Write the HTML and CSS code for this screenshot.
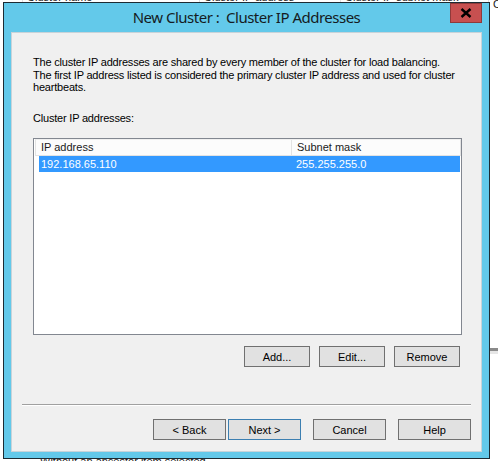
FILE: index.html
```html
<!DOCTYPE html>
<html>
<head>
<meta charset="utf-8">
<link rel="stylesheet" href="styles.css">
</head>
<body>
<div class="desktop">
  <div class="bg-header">
    <span class="bg-col bg-c1">Cluster name</span>
    <span class="bg-col bg-c2">Cluster IP address</span>
    <span class="bg-col bg-c3">Cluster IP subnet mask</span>
    <span class="bg-col bg-c4">Clu</span>
  </div>
  <div class="bg-rule"></div>
  <div class="bg-footer">Without an ancestor item selected</div>

  <div class="window">
    <div class="titlebar">
      <span class="title">New Cluster :&nbsp; Cluster IP Addresses</span>
      <div class="close">
        <svg width="12" height="10" viewBox="0 0 12 10"><path d="M1.5 1 L10.5 9 M10.5 1 L1.5 9" stroke="#000" stroke-width="2.4" fill="none"/></svg>
      </div>
    </div>
    <div class="panel">
      <p class="intro">The cluster IP addresses are shared by every member of the cluster for load balancing.<br>The first IP address listed is considered the primary cluster IP address and used for cluster heartbeats.</p>
      <div class="label">Cluster IP addresses:</div>
      <div class="listbox">
        <div class="lv-header">
          <div class="hcol hcol1">IP address</div>
          <div class="hcol hcol2">Subnet mask</div>
        </div>
        <div class="lv-row selected">
          <div class="rcol rcol1">192.168.65.110</div>
          <div class="rcol rcol2">255.255.255.0</div>
        </div>
      </div>
      <div class="list-buttons">
        <div class="btn btn-sm">Add...</div>
        <div class="btn btn-sm">Edit...</div>
        <div class="btn btn-sm">Remove</div>
      </div>
      <div class="separator"></div>
      <div class="nav-buttons">
        <div class="btn btn-nav">&lt; Back</div>
        <div class="btn btn-nav btn-default">Next &gt;</div>
        <div class="btn btn-nav btn-gap">Cancel</div>
        <div class="btn btn-nav btn-gap">Help</div>
      </div>
    </div>
  </div>
</div>
</body>
</html>
```

FILE: styles.css
```css
html, body {
  margin: 0;
  padding: 0;
  background: #ffffff;
}

.desktop {
  position: relative;
  width: 498px;
  height: 461px;
  overflow: hidden;
  background: #ffffff;
  font-family: "Liberation Sans", Arial, sans-serif;
}

.bg-header {
  position: absolute;
  left: 0;
  top: -9px;
  width: 498px;
  height: 12px;
  font-size: 11px;
  color: #1a1a1a;
}

.bg-col {
  position: absolute;
  top: 0;
  padding-left: 4px;
  border-left: 1px solid #e0e0e0;
}

.bg-c1 { left: 22px; }
.bg-c2 { left: 199px; }
.bg-c3 { left: 340px; }
.bg-c4 { left: 488px; top: 7px; }

.bg-rule {
  position: absolute;
  left: 490px;
  top: 348px;
  width: 8px;
  height: 3px;
  background: #8a8a8a;
  border-bottom: 3px solid #e6e6e6;
}

.bg-footer {
  position: absolute;
  left: 40px;
  top: 455px;
  font-size: 11px;
  color: #202020;
}

.window {
  position: absolute;
  left: 3px;
  top: 2px;
  width: 487px;
  height: 457px;
  box-sizing: border-box;
  border: 1px solid #1d2b33;
  background: #63c9ea;
  padding: 0 7px 6px 7px;
  display: flex;
  flex-direction: column;
}

.titlebar {
  position: relative;
  height: 29px;
  flex: none;
  display: flex;
  justify-content: center;
}

.title {
  font-family: "Noto Sans", "Open Sans", sans-serif;
  font-size: 15px;
  letter-spacing: -0.5px;
  line-height: 20px;
  padding-top: 4px;
  color: #151b22;
}

.close {
  position: absolute;
  right: 0;
  top: 0;
  width: 32px;
  height: 20px;
  box-sizing: border-box;
  background: #c75050;
  border: 1px solid #8f3a3a;
  display: flex;
  align-items: center;
  justify-content: center;
}

.panel {
  flex: 1;
  background: #f0f0f0;
  box-sizing: border-box;
  border: 1px solid #c8d3d9;
  display: flex;
  flex-direction: column;
  font-size: 11px;
  color: #000000;
}

.intro {
  margin: 23px 20px 0 21px;
  line-height: 12.5px;
  letter-spacing: -0.2px;
}

.label {
  margin: 18px 0 0 21px;
  line-height: 12.5px;
  letter-spacing: -0.2px;
}

.listbox {
  margin: 14px 0 0 21px;
  width: 429px;
  height: 197px;
  box-sizing: border-box;
  border: 1px solid #828790;
  background: #ffffff;
  padding: 0 0 0 1px;
}

.lv-header {
  display: flex;
  height: 17px;
  box-sizing: border-box;
  background: #fcfcfc;
  border: 1px solid #e3e3e3;
  border-top-color: #f0f0f0;
  line-height: 15px;
  width: 426px;
}

.hcol {
  padding-left: 5px;
  box-sizing: border-box;
  color: #1a1a1a;
}

.hcol1 {
  width: 256px;
  border-right: 1px solid #e3e3e3;
}

.hcol2 {
  flex: 1;
}

.lv-row {
  display: flex;
  height: 16px;
  line-height: 16px;
  margin-left: 4px;
  width: 421px;
  padding-left: 2px;
  box-sizing: border-box;
}

.lv-row.selected {
  background: #3399ff;
  color: #ffffff;
}

.rcol1 {
  width: 255px;
}

.btn {
  box-sizing: border-box;
  height: 21px;
  background: #e1e1e1;
  border: 1px solid #707070;
  display: flex;
  align-items: center;
  justify-content: center;
  font-size: 11px;
  color: #000000;
}

.list-buttons {
  display: flex;
  justify-content: flex-end;
  gap: 9px;
  margin: 11px 21px 0 0;
}

.btn-sm {
  width: 66px;
}

.separator {
  margin: 37px 10px 0 10px;
  height: 1px;
  background: #a0a0a0;
  border-bottom: 1px solid #ffffff;
}

.nav-buttons {
  display: flex;
  justify-content: flex-end;
  margin: 13px 10px 0 0;
}

.btn-nav {
  width: 73px;
}

.btn-default {
  margin-left: 2px;
  border-color: #3c7fb1;
}

.btn-gap {
  margin-left: 12px;
}
```
